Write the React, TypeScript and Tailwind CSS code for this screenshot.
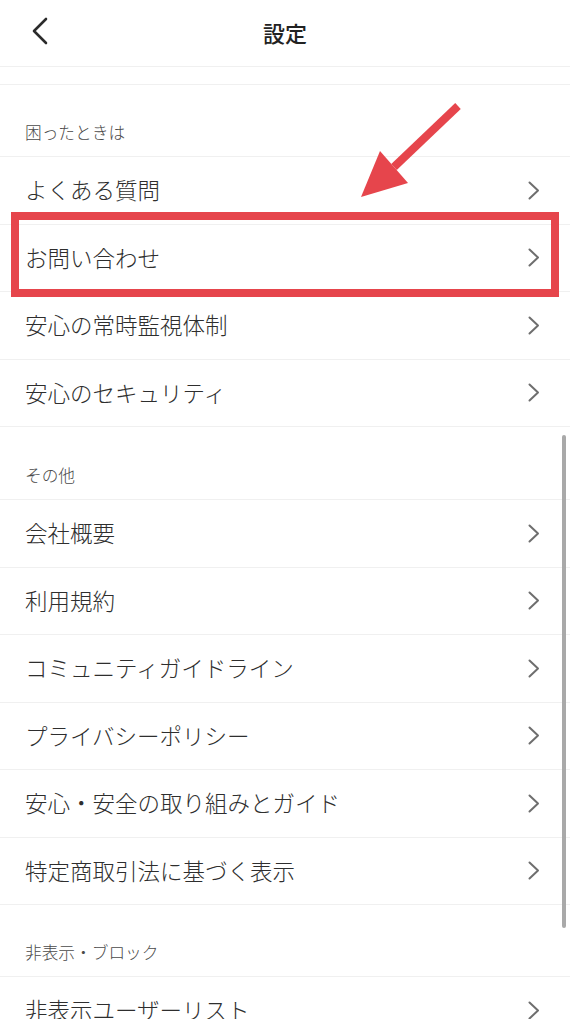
import React from "react";

const Chevron = () => (
  <svg width="12" height="19" viewBox="0 0 12 19" fill="none" className="shrink-0">
    <path d="M1.5 1.5 L10 9.5 L1.5 17.5" stroke="#6e6e6e" strokeWidth="2" strokeLinecap="round" strokeLinejoin="round" />
  </svg>
);

const Row = ({ label, h = "h-[67.5px]" }: { label: string; h?: string }) => (
  <div className={`${h} flex items-center justify-between border-b border-[#f0f0f0] pl-[25px] pr-[30px]`}>
    <span className="text-[22.5px] font-light text-[#2e2e2e] leading-none -mt-[2px]">{label}</span>
    <Chevron />
  </div>
);

const SectionHeader = ({ label, h }: { label: string; h: string }) => (
  <div className={`${h} flex items-end border-b border-[#f0f0f0] pl-[25px] pb-[14px]`}>
    <span className="text-[16.7px] font-light text-[#4a4a4a] leading-[20px]">{label}</span>
  </div>
);

export default function App() {
  return (
    <div
      className="relative w-[570px] h-[1019px] overflow-hidden bg-white"
      style={{ fontFamily: '"Noto Sans CJK JP", "Noto Sans", sans-serif' }}
    >
      <div className="h-[67px] flex items-center justify-center relative border-b border-[#f0f0f0]">
        <svg width="16" height="28" viewBox="0 0 16 28" fill="none" className="absolute left-[32px] top-[17px]">
          <path d="M14 2 L2 14 L14 26" stroke="#2b2b2b" strokeWidth="2.6" strokeLinecap="round" strokeLinejoin="round" />
        </svg>
        <span className="text-[22px] font-medium text-[#222222] leading-none -mt-[3px]">設定</span>
      </div>
      <div className="h-[18px] border-b border-[#f0f0f0]" />
      <SectionHeader label="困ったときは" h="h-[72px]" />
      <Row label="よくある質問" />
      <Row label="お問い合わせ" />
      <Row label="安心の常時監視体制" />
      <Row label="安心のセキュリティ" />
      <SectionHeader label="その他" h="h-[73px]" />
      <Row label="会社概要" />
      <Row label="利用規約" />
      <Row label="コミュニティガイドライン" />
      <Row label="プライバシーポリシー" />
      <Row label="安心・安全の取り組みとガイド" />
      <Row label="特定商取引法に基づく表示" />
      <SectionHeader label="非表示・ブロック" h="h-[72px]" />
      <Row label="非表示ユーザーリスト" />

      {/* scrollbar */}
      <div className="absolute left-[562px] top-[435px] w-[4px] h-[493px] rounded-full bg-[#a9a9a9]" />

      {/* red highlight box */}
      <div className="absolute left-[11px] top-[212px] w-[548px] h-[85px] border-[8.5px] border-[#e6454c]" />

      {/* arrow */}
      <svg className="absolute left-0 top-0" width="570" height="300" viewBox="0 0 570 300">
        <line x1="458" y1="106" x2="394" y2="167" stroke="#e6454c" strokeWidth="8" />
        <polygon points="361,197 380,151 408,183" fill="#e6454c" />
      </svg>
    </div>
  );
}
